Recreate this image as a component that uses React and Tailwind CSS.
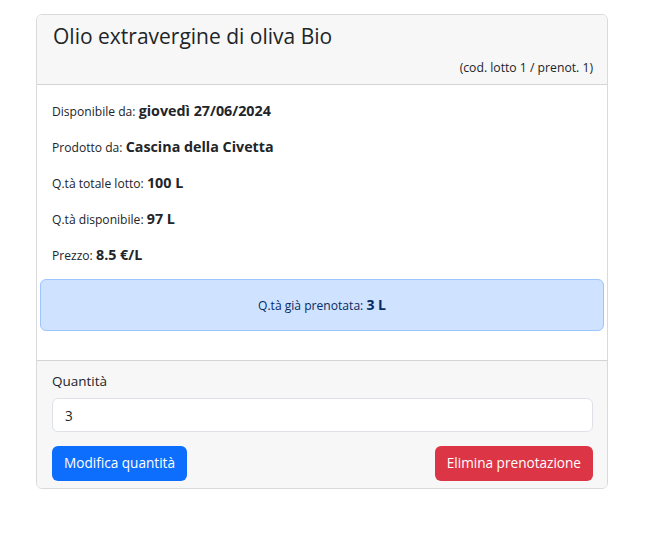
const rows = [
  ["Disponibile da:", "giovedì 27/06/2024"],
  ["Prodotto da:", "Cascina della Civetta"],
  ["Q.tà totale lotto:", "100 L"],
  ["Q.tà disponibile:", "97 L"],
  ["Prezzo:", "8.5 €/L"],
];

export default function App() {
  return (
    <div className="min-h-screen bg-white pt-[14px] pl-[36px] text-[#212529] font-['Open_Sans',sans-serif]">
      <div className="w-[572px] border border-[#dadada] rounded-md overflow-hidden">
        {/* Header */}
        <div className="bg-[#f7f7f7] border-b border-[#d4d4d4] pl-4 pr-[14px] pt-2 pb-[6px]">
          <h4 className="text-[21px] leading-[27px] mb-2">Olio extravergine di oliva Bio</h4>
          <div className="text-right text-[12.2px] leading-[20px]">(cod. lotto 1 / prenot. 1)</div>
        </div>

        {/* Body */}
        <div className="px-[3px] pt-4 pb-[29px]">
          {rows.map(([label, value], i) => (
            <p
              key={i}
              className={`h-[20px] px-3 text-[12.1px] leading-[20px] ${i === rows.length - 1 ? "mb-[14px]" : "mb-4"}`}
            >
              {label} <b className="font-bold text-[14.3px] leading-[20px]">{value}</b>
            </p>
          ))}
          <div className="h-[52px] flex items-center justify-center rounded-md border border-[#9ec5fe] bg-[#cfe2ff] text-[#052c65] text-[12.1px]">
            <span className="leading-[20px]">
              Q.tà già prenotata: <b className="font-bold text-[14px] leading-[20px]">3 L</b>
            </span>
          </div>
        </div>

        {/* Footer */}
        <div className="bg-[#f7f7f7] border-t border-[#d4d4d4] pl-[15px] pr-[14px] pt-2 pb-[7px]">
          <label className="block text-[13.5px] leading-[24px] mb-[5px]">Quantità</label>
          <input
            type="text"
            defaultValue="3"
            className="block w-full h-[34px] px-3 text-[13.6px] bg-white border border-[#dee2e6] rounded-md outline-none"
          />
          <div className="flex justify-between mt-[14px]">
            <button className="h-[35px] px-3 rounded-md bg-[#0d6efd] text-white text-[13.6px]">Modifica quantità</button>
            <button className="h-[35px] px-3 rounded-md bg-[#dc3545] text-white text-[13.6px]">Elimina prenotazione</button>
          </div>
        </div>
      </div>
    </div>
  );
}
